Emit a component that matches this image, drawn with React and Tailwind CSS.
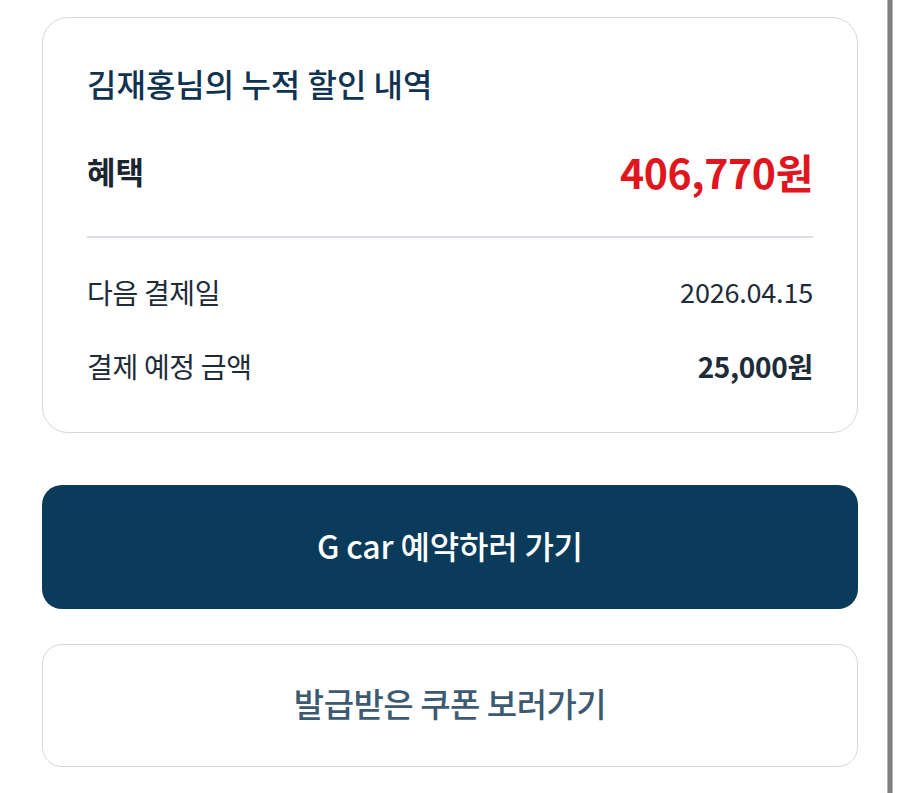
export default function App() {
  const font = { fontFamily: '"Noto Sans CJK KR", "Noto Sans", sans-serif' };
  return (
    <div className="flex min-h-[793px] bg-white" style={font}>
      <div className="w-[816px] ml-[42px] pt-[17px]">
        <div className="rounded-[26px] border border-[#d3d9de] px-[44px] pt-[41px] pb-[46px]">
          <h1 className="text-[32px] leading-[48px] font-medium text-[#0f3350]">김재홍님의 누적 할인 내역</h1>
          <div className="mt-[36px] flex items-center justify-between">
            <span className="text-[31px] leading-[56px] font-bold text-[#1a2530]">혜택</span>
            <span className="text-[41px] leading-[56px] font-bold text-[#e0161f] tracking-[-0.4px]">406,770원</span>
          </div>
          <div className="mt-[37px] h-[2px] bg-[#d7dde2]" />
          <div className="mt-[34px] flex items-center justify-between text-[28px] leading-[40px] text-[#1e2b39] tracking-[-0.3px]">
            <span>다음 결제일</span>
            <span className="text-[27px] tracking-[-0.2px]">2026.04.15</span>
          </div>
          <div className="mt-[34px] flex items-center justify-between text-[28px] leading-[40px] text-[#1e2b39] tracking-[-0.3px]">
            <span>결제 예정 금액</span>
            <span className="font-bold">25,000원</span>
          </div>
        </div>
        <button className="mt-[52px] flex h-[124px] w-full items-center justify-center rounded-[20px] bg-[#0b3b5b] pb-[4px] text-[32px] font-medium text-white tracking-[-0.2px]">
          G car 예약하러 가기
        </button>
        <button className="mt-[35px] flex h-[123px] w-full items-center justify-center rounded-[20px] border border-[#d3d9de] bg-white pb-[4px] text-[33px] font-medium text-[#3d5a73] tracking-[-0.5px]">
          발급받은 쿠폰 보러가기
        </button>
      </div>
      <div className="ml-auto mr-[7px] w-[6px] border-x border-[#b5b5b5] bg-[#7f7f7f]" />
    </div>
  );
}
